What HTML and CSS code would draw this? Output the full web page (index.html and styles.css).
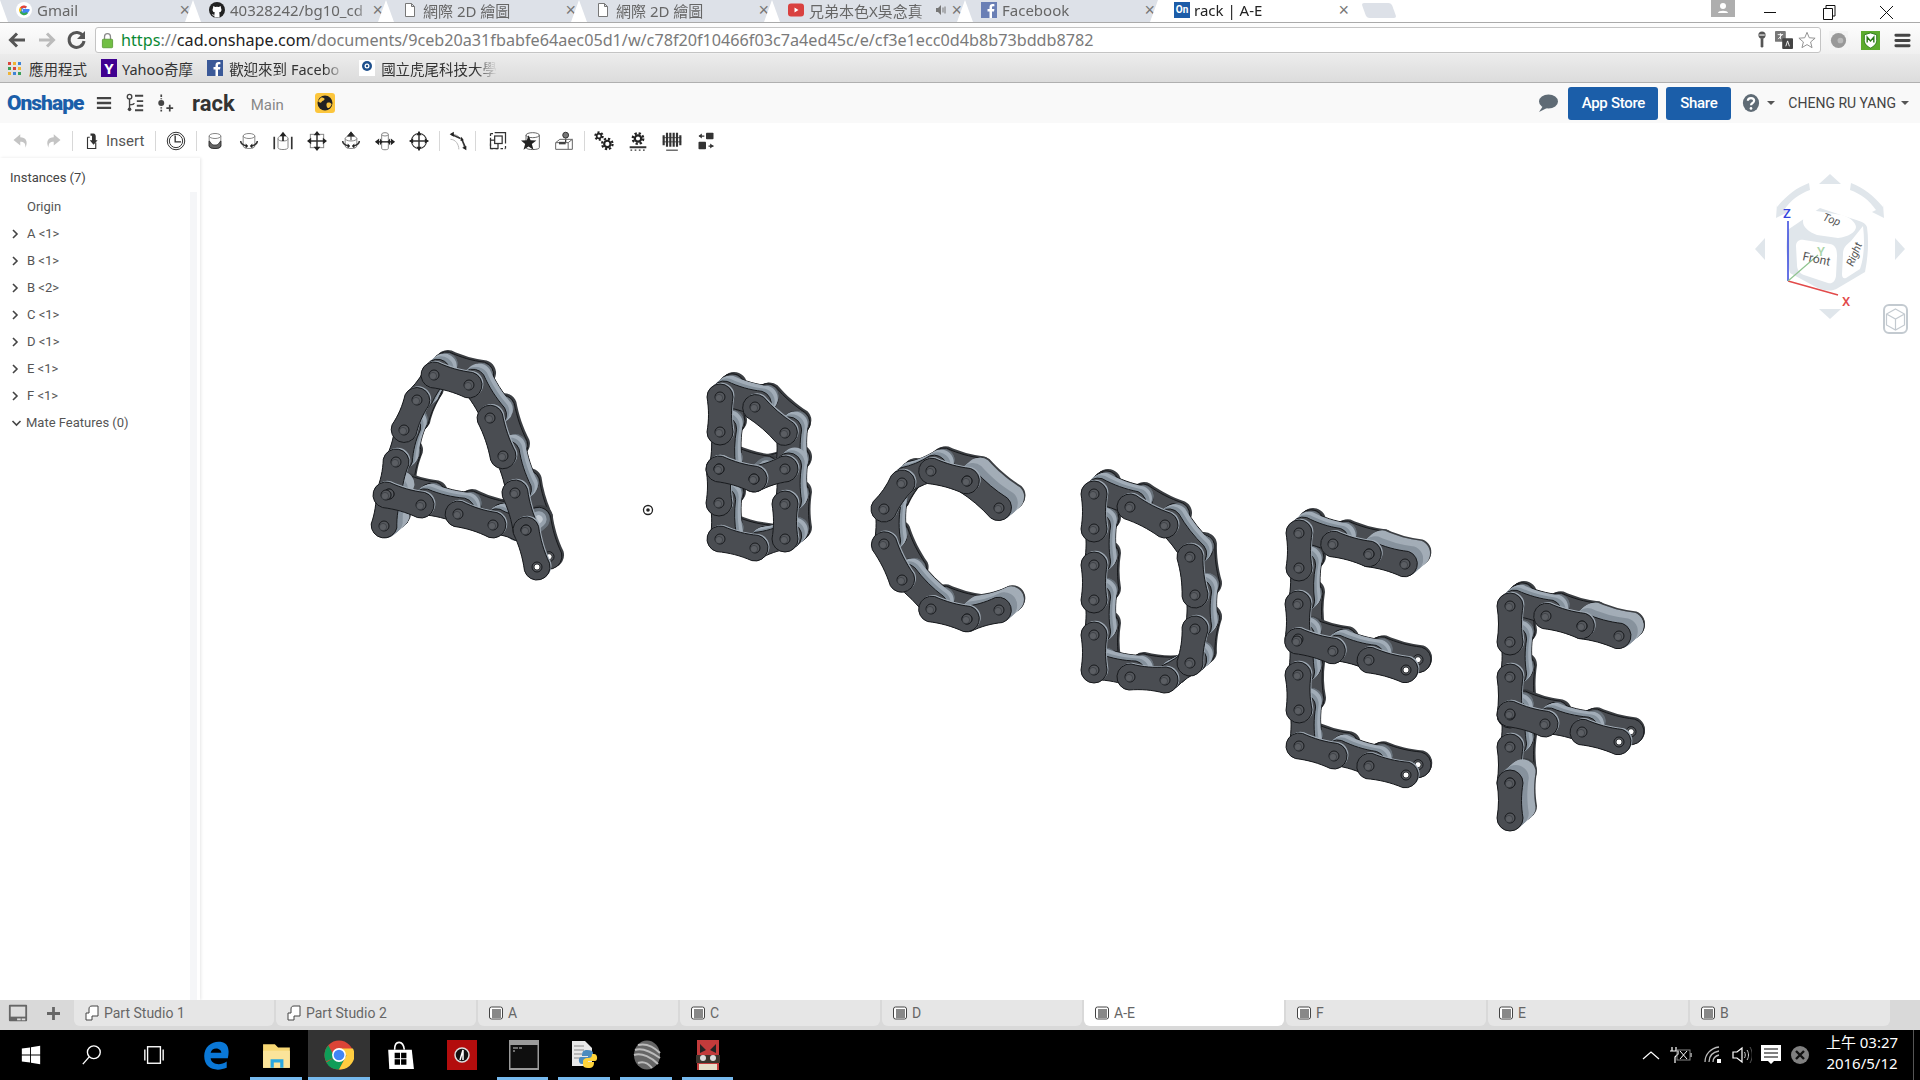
FILE: index.html
```html
<!DOCTYPE html>
<html lang="zh-Hant">
<head>
    <meta charset="UTF-8">
    <title>rack | A-E</title>
    <link rel="stylesheet" href="styles.css">
</head>
<body>
    <!-- browser tabs -->
    <div class="tabstrip">
        <div class="tab">
            <svg class="fav" viewBox="0 0 16 16"><circle cx="8" cy="8" r="8" fill="#fff"/><path d="M13.5 8H8v2.2h3.1A3.3 3.3 0 1 1 10.2 5.5" fill="none" stroke="#4285f4" stroke-width="2.2"/><path d="M4.8 6.2A3.6 3.6 0 0 1 10.2 5.5" fill="none" stroke="#ea4335" stroke-width="2.2"/><path d="M4.5 9.6a3.6 3.6 0 0 1 .2-3.4" fill="none" stroke="#fbbc05" stroke-width="2.2"/><path d="M11 10.6a3.6 3.6 0 0 1-6.4-1" fill="none" stroke="#34a853" stroke-width="2.2"/></svg>
            <span class="tabtext">Gmail</span><span class="tabx">×</span>
        </div>
        <div class="tab">
            <svg class="fav" viewBox="0 0 16 16"><circle cx="8" cy="8" r="8" fill="#222"/><path d="M4 6l.3-2 2 1a5 5 0 0 1 3.4 0l2-1 .3 2c1 2 .6 4-2 4.6.5.5.6 1 .6 5H5.400v-2c-1.500.3-2-.4-2.400-1.500.8.2 1.200.8 2.400 1 0-1 .1-2 .6-2.500C3.400 10 3 8 4 6z" fill="#fff"/></svg>
            <span class="tabtext">40328242/bg10_cd</span><span class="tabx">×</span>
        </div>
        <div class="tab">
            <svg class="fav" viewBox="0 0 16 16"><path d="M3.500 1.500h6l3 3v10h-9z M9.500 1.500v3h3" fill="#fff" stroke="#777"/></svg>
            <span class="tabtext">網際 2D 繪圖</span><span class="tabx">×</span>
        </div>
        <div class="tab">
            <svg class="fav" viewBox="0 0 16 16"><path d="M3.500 1.500h6l3 3v10h-9z M9.500 1.500v3h3" fill="#fff" stroke="#777"/></svg>
            <span class="tabtext">網際 2D 繪圖</span><span class="tabx">×</span>
        </div>
        <div class="tab">
            <svg class="fav" viewBox="0 0 16 16"><rect y="1.500" width="16" height="13" rx="3" fill="#d9413f"/><path d="M6.500 5.500l4 2.500-4 2.500z" fill="#fff"/></svg>
            <span class="tabtext">兄弟本色X吳念真</span>
            <svg class="tabsound" viewBox="0 0 12 12"><path d="M1 4h2l3-3v10L3 8H1z" fill="#777"/><path d="M8 3.500v5M10 2.500v7" stroke="#777" fill="none"/></svg>
            <span class="tabx">×</span>
        </div>
        <div class="tab">
            <svg class="fav" viewBox="0 0 16 16"><rect width="16" height="16" fill="#6a7fb5"/><path d="M11 16V9.500h2l.4-2.500H11V5.500c0-.8.300-1.200 1.200-1.200h1.200V2.200C13 2.100 12.300 2 11.500 2 9.700 2 8.500 3.100 8.500 5.200V7h-2v2.500h2V16z" fill="#fff"/></svg>
            <span class="tabtext">Facebook</span><span class="tabx">×</span>
        </div>
        <div class="tab tab-active">
            <span class="fav-on">On</span>
            <span class="tabtext">rack | A-E</span><span class="tabx">×</span>
        </div>
        <div class="newtab"></div>
        <div class="winctl">
            <div class="profile"><svg viewBox="0 0 24 18" width="24" height="18"><circle cx="12" cy="6" r="3" fill="#fff"/><path d="M7 13c0-3 10-3 10 0z" fill="#fff"/></svg></div>
            <svg class="winbtn" viewBox="0 0 58 22"><path d="M23 12.500h12" stroke="#111"/></svg>
            <svg class="winbtn" viewBox="0 0 58 22"><path d="M24.500 8.500h9v11h-9z M27 8V5.500h9v10.500h-2.500" fill="none" stroke="#111"/></svg>
            <svg class="winbtn" viewBox="0 0 58 22"><path d="M23 6l13 13M36 6L23 19" stroke="#111"/></svg>
        </div>
    </div>

    <!-- address bar -->
    <div class="addressrow">
        <svg class="navbtn" viewBox="0 0 30 26"><path d="M23 13H9M15 6.500L8.500 13l6.500 6.500" fill="none" stroke="#555" stroke-width="3"/></svg>
        <svg class="navbtn" viewBox="0 0 30 26"><path d="M7 13h14M15 6.500l6.500 6.500-6.500 6.500" fill="none" stroke="#bbb" stroke-width="3"/></svg>
        <svg class="navbtn" viewBox="0 0 30 26"><path d="M21 9a7.500 7.500 0 1 0 1 5" fill="none" stroke="#555" stroke-width="3"/><path d="M23 4v8h-8z" fill="#555"/></svg>
        <div class="omnibox">
            <svg class="lock" viewBox="0 0 14 20"><path d="M3.500 9V5.500a3.500 3.500 0 0 1 7 0V9" fill="none" stroke="#888" stroke-width="1.500"/><rect x="1" y="8.500" width="12" height="10" rx="1" fill="#71bf44" stroke="#5a9a35"/></svg>
            <div class="url"><span class="u-https">https</span>://<span class="u-host">cad.onshape.com</span>/documents/9ceb20a31fbabfe64aec05d1/w/c78f20f10466f03c7a4ed45c/e/cf3e1ecc0d4b8b73bddb8782</div>
            <svg class="ombtn" viewBox="0 0 20 20"><circle cx="10" cy="4.500" r="4" fill="#555"/><rect x="7" y="3.500" width="6" height="2" fill="#bbb"/><path d="M8.500 8h3v9l-1.500 2-1.500-2z" fill="#555"/></svg>
            <svg class="ombtn" viewBox="0 0 20 20"><rect x="0" y="0" width="12" height="12" rx="1" fill="#777"/><rect x="8" y="8" width="12" height="12" rx="1" fill="#444"/><path d="M3 4h6M6 2.500V9M3.500 9L8 4" stroke="#fff" fill="none"/><path d="M12 17l2-6 2 6" stroke="#fff" fill="none"/></svg>
            <svg class="ombtn ombtn-star" viewBox="0 0 20 20"><path d="M10 1.500l2.500 6 6.500.5-5 4.200 1.600 6.300-5.600-3.400-5.600 3.400L6 12.200 1 8l6.500-.5z" fill="#fff" stroke="#888"/></svg>
        </div>
        <div class="exts">
            <svg class="ext" viewBox="0 0 20 20"><rect width="20" height="20" fill="#f4f4f4"/><circle cx="10" cy="10" r="8" fill="#999"/><circle cx="12" cy="10" r="3" fill="#bbb"/></svg>
            <svg class="ext" viewBox="0 0 20 20"><rect width="20" height="20" fill="#5cab2e"/><path d="M10 2l6.500 2v6c0 4-3 6-6.500 8-3.500-2-6.500-4-6.500-8V4z" fill="#fff" stroke="#2d7a1a"/><path d="M6.500 12V6.500l3.500 4 3.500-4V12" fill="none" stroke="#2d7a1a" stroke-width="1.500"/></svg>
            <svg class="ext" viewBox="0 0 20 20"><path d="M3 4.500h14M3 10h14M3 15.500h14" stroke="#444" stroke-width="3" stroke-linecap="round"/></svg>
        </div>
    </div>

    <!-- bookmarks -->
    <div class="bookmarks">
        <div class="bm">
            <svg class="bmicon-apps" viewBox="0 0 13 13"><path d="M0 0h3v3H0z" fill="#d9453c"/><path d="M5 0h3v3H5z" fill="#efb336"/><path d="M10 0h3v3h-3z" fill="#3e84d6"/><path d="M0 5h3v3H0z" fill="#3c9f58"/><path d="M5 5h3v3H5z" fill="#d9453c"/><path d="M10 5h3v3h-3z" fill="#efb336"/><path d="M0 10h3v3H0z" fill="#efb336"/><path d="M5 10h3v3H5z" fill="#3e84d6"/><path d="M10 10h3v3h-3z" fill="#3c9f58"/></svg>
            <span>應用程式</span>
        </div>
        <div class="bm">
            <span class="bmicon-y">Y</span><span>Yahoo奇摩</span>
        </div>
        <div class="bm">
            <svg class="bmicon" viewBox="0 0 16 16"><rect width="16" height="16" fill="#3b5998"/><path d="M11 16V9.500h2l.4-2.500H11V5.500c0-.8.300-1.200 1.200-1.200h1.200V2.200C13 2.100 12.300 2 11.500 2 9.700 2 8.500 3.100 8.500 5.200V7h-2v2.500h2V16z" fill="#fff"/></svg>
            <span class="bm-clip">歡迎來到 Facebo</span>
        </div>
        <div class="bm">
            <svg class="bmicon" viewBox="0 0 16 16"><rect width="16" height="16" fill="#fff"/><circle cx="8" cy="6" r="5" fill="#1d4f8c"/><circle cx="8" cy="6" r="2.500" fill="#fff"/><circle cx="8" cy="6" r="1.200" fill="#1d4f8c"/></svg>
            <span class="bm-clip">國立虎尾科技大學</span>
        </div>
    </div>

    <!-- onshape header -->
    <div class="appheader">
        <span class="logo">Onshape</span>
        <svg class="hicon hicon-menu" viewBox="0 0 18 18"><path d="M1 3.500h16M1 9h16M1 14.500h16" stroke="#444" stroke-width="2.600"/></svg>
        <svg class="hicon hicon-ver" viewBox="0 0 22 22"><circle cx="5" cy="4" r="2.500" fill="none" stroke="#444" stroke-width="1.500"/><circle cx="5" cy="18" r="2" fill="#444"/><path d="M5 6.500v10M5 13c5 0 5-1 5-2" fill="none" stroke="#444" stroke-width="1.500"/><path d="M11 3h9M13 9h7M13 14h7M11 19h9" stroke="#444" stroke-width="2"/></svg>
        <svg class="hicon hicon-add" viewBox="0 0 20 22"><circle cx="5" cy="11" r="3.500" fill="#444"/><path d="M5 1v3M5 5.500v1M5 16v1.500M5 19v2" stroke="#444" stroke-width="2"/><path d="M11 17h8M15 13v8" stroke="#444" stroke-width="2"/></svg>
        <span class="docname">rack</span>
        <span class="branch">Main</span>
        <svg class="globe" viewBox="0 0 20 20"><rect width="20" height="20" rx="3" fill="#fcc63d"/><circle cx="10" cy="10" r="7.500" fill="#222"/><path d="M6 4.500c2 0 4 .5 3.500 2S7 7.500 6.500 9 4 9.500 3 8zM12 10c2-1 4 0 4.500 1s-2 4.500-3.500 4-2-4-1-5z" fill="#fcc63d"/></svg>
        <div class="headright">
            <svg class="comment" viewBox="0 0 20 20"><ellipse cx="10.500" cy="8.500" rx="9.500" ry="7" fill="#5f6b75"/><path d="M5 13L1 19l8-4z" fill="#5f6b75"/></svg>
            <button class="btn btn-store">App Store</button>
            <button class="btn btn-share">Share</button>
            <svg class="help" viewBox="0 0 20 22"><ellipse cx="10" cy="11" rx="9" ry="10" fill="#5f6b75"/><path d="M6.500 8.500c0-4 7-4 7 0 0 2.500-3.500 2.500-3.500 5" fill="none" stroke="#fff" stroke-width="2.400"/><circle cx="10" cy="17" r="1.500" fill="#fff"/></svg>
            <span class="caret caret-help"></span>
            <span class="username">CHENG RU YANG</span>
            <span class="caret"></span>
        </div>
    </div>

    <!-- feature toolbar -->
    <div class="toolbar">
        <svg class="ti ti-undo" viewBox="0 0 24 24"><path d="M11 3L2 10.500l9 7.500v-5c5 0 7 2 7 8 4-9 0-14-7-14z" fill="#c4c4c4" stroke="none"/></svg>
        <svg class="ti ti-redo" viewBox="0 0 24 24"><path d="M13 3l9 7.500-9 7.500v-5c-5 0-7 2-7 8-4-9 0-14 7-14z" fill="#c4c4c4" stroke="none"/></svg>
        <span class="sep"></span>
        <svg class="ti ti-insert" viewBox="0 0 24 24"><path d="M6 7h3M6 7v15h11v-8" stroke-width="1.500"/><path d="M10 2h4c2 0 3 2 3 4v5h2.500L14 17 9 11h3V5h-2z" fill="#333" stroke="none"/></svg>
        <span class="insert-label">Insert</span>
        <span class="sep sep-ins"></span>
        <svg class="ti" viewBox="0 0 24 24"><circle cx="12" cy="12" r="10.500"/><circle cx="12" cy="12" r="8"/><path d="M11 5.500V13h7" stroke-width="1.600"/></svg>
        <span class="sep sep-a"></span>
        <svg class="ti" viewBox="0 0 24 24"><ellipse cx="12" cy="6" rx="7" ry="3" stroke="#888"/><path d="M5 6v12c0 4 14 4 14 0V6" stroke="#888"/><path d="M5 12c2 1 2 5 7 5s5-4 7-5v6c0 4-14 4-14 0z" fill="#666" stroke="#333"/></svg>
        <svg class="ti" viewBox="0 0 24 24"><ellipse cx="12" cy="6" rx="7" ry="3" stroke="#888"/><path d="M5 6v12c0 4 14 4 14 0V6" stroke="#888"/><path d="M2 12c0 4 3 5 7 6M22 12c0 4-3 5-7 6" stroke-width="1.800"/><path d="M8 15v6l3-3zM16 15v6l-3-3z" fill="#222" stroke="none"/></svg>
        <svg class="ti" viewBox="0 0 24 24"><ellipse cx="12" cy="9" rx="6" ry="3" stroke="#888"/><path d="M6 9v11c0 3 12 3 12 0V9" stroke="#888"/><path d="M1.500 7v15M22.500 7v15" stroke-width="2"/><path d="M12 1l4 5h-3v6h-2V6H8z" fill="#222" stroke="none"/></svg>
        <svg class="ti" viewBox="0 0 24 24"><rect x="4" y="4" width="16" height="16" stroke="#888"/><path d="M12 3v18M3 12h18" stroke-width="1.800"/><path d="M12 0l4 5H8zM12 24l4-5H8zM0 12l5-4v8zM24 12l-5-4v8z" fill="#222" stroke="none"/></svg>
        <svg class="ti" viewBox="0 0 24 24"><ellipse cx="12" cy="9" rx="7" ry="3" stroke="#888"/><path d="M5 9v9c0 4 14 4 14 0V9" stroke="#888"/><path d="M12 1l4 5H8zM12 6v5" fill="#222"/><path d="M2 12c0 4 3 5 7 6M22 12c0 4-3 5-7 6" stroke-width="1.800"/><path d="M8 15v6l3-3zM16 15v6l-3-3z" fill="#222" stroke="none"/></svg>
        <svg class="ti" viewBox="0 0 24 24"><ellipse cx="12" cy="4" rx="4" ry="2" stroke="#888"/><path d="M8 4v17c0 2 8 2 8 0V4" stroke="#888"/><path d="M1 13h22" stroke-width="1.800"/><path d="M0 13l5-4v8zM24 13l-5-4v8zM9 13l-3-4v8zM15 13l3-4v8z" fill="#222" stroke="none"/></svg>
        <svg class="ti" viewBox="0 0 24 24"><circle cx="12" cy="12" r="9" stroke-width="1.300"/><path d="M12 1v22M1 12h22" stroke-width="1.800"/><path d="M12 0l3 5H9zM12 24l3-5H9zM0 12l5-3v6zM24 12l-5-3v6z" fill="#222" stroke="none"/></svg>
        <span class="sep sep-b"></span>
        <svg class="ti ti-curve" viewBox="0 0 24 24"><path d="M5 4c8 0 14 8 14 16" stroke="#999"/><path d="M3 10c6 0 10 6 10 12" stroke="#bbb"/><path d="M4 4l11 5M17 11l4 9" stroke-width="1.800"/><path d="M2 4l5-3v6zM15 12l1-5 3 4zM22 23l-5-3 5-2z" fill="#222" stroke="none"/></svg>
        <span class="sep sep-c"></span>
        <svg class="ti ti-tight" viewBox="0 0 24 24"><path d="M8 2h13v13" stroke-width="1.500"/><path d="M3 3v9M3 3h3M3 15v3M3 21h3M9 21h3M15 21h6M21 18v3" stroke-dasharray="3 2" stroke-width="1.500"/><rect x="3" y="11" width="9" height="10" stroke-width="1.500"/><rect x="8" y="6" width="9" height="9" stroke-width="1.500" fill="#fff"/></svg>
        <svg class="ti ti-tight" viewBox="0 0 24 24"><ellipse cx="14" cy="5" rx="8" ry="3" stroke="#666"/><path d="M6 5v15c0 3 16 3 16 0V5" stroke="#666"/><path d="M9 5l2.500 6 7 .5-5.500 4 2 7-6-4-6 4 2-7L0 11.500l7-.5z" fill="#222" stroke="none"/></svg>
        <svg class="ti" viewBox="0 0 24 24"><circle cx="14" cy="5" r="3.500" fill="#777" stroke="#333"/><path d="M14 9v5" stroke-width="1.500"/><path d="M2 14l5-4h15v12H2z M2 14h15v8M17 14l5-4" stroke="#666"/><rect x="6" y="13" width="8" height="3" fill="#444" stroke="none"/></svg>
        <span class="sep sep-d"></span>
        <svg class="ti" viewBox="0 0 24 24"><circle cx="6" cy="6" r="2.800" stroke="#222" stroke-width="2"/><circle cx="6" cy="6" r="4.500" stroke="#222" stroke-width="2.400" stroke-dasharray="2.400 2.300"/><circle cx="16" cy="15.500" r="3.800" stroke="#222" stroke-width="2.600"/><circle cx="16" cy="15.500" r="6.300" stroke="#222" stroke-width="2.600" stroke-dasharray="2.700 2.250"/></svg>
        <svg class="ti" viewBox="0 0 24 24"><circle cx="12" cy="9" r="3.800" stroke="#222" stroke-width="2.600"/><circle cx="12" cy="9" r="6.300" stroke="#222" stroke-width="2.800" stroke-dasharray="2.700 2.250"/><path d="M2 19.500h20" stroke-width="2.400"/><path d="M3 23h2M8 23h2M13 23h2M18 23h2" stroke-width="1.500"/></svg>
        <svg class="ti" viewBox="0 0 24 24"><path d="M2 5v12M6 2v17M10 2v17M14 2v17M18 2v17M22 5v12" stroke-width="2.600"/><path d="M1 8h22M1 13h22" stroke-width="1"/><path d="M5 23h14" stroke-width="1.300"/></svg>
        <svg class="ti" viewBox="0 0 24 24"><rect x="12" y="2" width="9" height="8" rx="1" fill="#333" stroke="none"/><rect x="3" y="13" width="9" height="9" rx="1" fill="#333" stroke="none"/><path d="M4 6h6M15 18h6" stroke-width="1.500"/><path d="M3 6l4-3v6zM21 18l-4-3v6z" fill="#333" stroke="none"/></svg>
    </div>

    <!-- main -->
    <div class="workspace">
        <div class="sidebar">
            <div class="inst-head">Instances (7)</div>
            <div class="treerow"><span class="chev-none"></span><span>Origin</span></div>
            <div class="treerow"><svg class="chev" viewBox="0 0 8 10"><path d="M2 1l4 4-4 4" fill="none" stroke="#444" stroke-width="1.600"/></svg><span>A &lt;1&gt;</span></div>
            <div class="treerow"><svg class="chev" viewBox="0 0 8 10"><path d="M2 1l4 4-4 4" fill="none" stroke="#444" stroke-width="1.600"/></svg><span>B &lt;1&gt;</span></div>
            <div class="treerow"><svg class="chev" viewBox="0 0 8 10"><path d="M2 1l4 4-4 4" fill="none" stroke="#444" stroke-width="1.600"/></svg><span>B &lt;2&gt;</span></div>
            <div class="treerow"><svg class="chev" viewBox="0 0 8 10"><path d="M2 1l4 4-4 4" fill="none" stroke="#444" stroke-width="1.600"/></svg><span>C &lt;1&gt;</span></div>
            <div class="treerow"><svg class="chev" viewBox="0 0 8 10"><path d="M2 1l4 4-4 4" fill="none" stroke="#444" stroke-width="1.600"/></svg><span>D &lt;1&gt;</span></div>
            <div class="treerow"><svg class="chev" viewBox="0 0 8 10"><path d="M2 1l4 4-4 4" fill="none" stroke="#444" stroke-width="1.600"/></svg><span>E &lt;1&gt;</span></div>
            <div class="treerow"><svg class="chev" viewBox="0 0 8 10"><path d="M2 1l4 4-4 4" fill="none" stroke="#444" stroke-width="1.600"/></svg><span>F &lt;1&gt;</span></div>
            <div class="treerow"><svg class="chev chev-down" viewBox="0 0 10 8"><path d="M1 2l4 4 4-4" fill="none" stroke="#444" stroke-width="1.600"/></svg><span>Mate Features (0)</span></div>
        </div>
        <div class="canvas">
            <svg id="chains" class="chains" viewBox="198 160 1720 843" width="1720" height="843"></svg>
            <svg class="navcube" viewBox="0 0 200 180" width="200" height="180">
                <g fill="#e0e6eb">
                    <path d="M110 14l11 10H99z"/>
                    <path d="M110 159l11-10H99z"/>
                    <path d="M35 89l10-11v22z"/>
                    <path d="M185 89l-10-11v22z"/>
                    <path d="M57 47c10-12 19-19 32-24l1 7c-11 4-19 10-26 20l4 2-12 6 1-14z"/>
                    <path d="M163 47c-10-12-19-19-32-24l-1 7c11 4 19 10 26 20l-4 2 12 6-1-14z"/>
                </g>
                <path d="M100 48l27 9c8 3 18 4 20 10 2 15 1 30-2 45l-27 16c-8 5-17 2-24-2l-24-13c-4-16-5-31-1-44z" fill="#e0e6eb"/>
                <path d="M90 50l32 5c8 2 14 8 14 12 0 5-8 10-18 11l-21-3c-8-3-14-8-14-13 0-6 3-12 7-12zM84 80l26 4c6 1 7 6 7 12l-1 20c-1 6-4 8-8 7l-24-8c-5-2-7-6-7-10l-1-19c0-4 3-7 8-6zM143 66c2 16 1 32-3 43l-14 9c-3 1-4-1-4-4l1-20c0-6 3-9 8-13z" fill="#fff"/>
                <path d="M68 61v60" stroke="#3344dd" stroke-width="1.500"/>
                <path d="M68 121l50 14" stroke="#e24a4a" stroke-width="1.500"/>
                <path d="M68 121l30-26" stroke="#8fc48f" stroke-width="1.200"/>
                <text x="63" y="58" class="cube-axis cube-z">Z</text>
                <text x="122" y="146" class="cube-axis cube-x">X</text>
                <text x="97" y="96" class="cube-axis cube-y">Y</text>
                <text class="cube-label" transform="translate(82,100) rotate(12)">Front</text>
                <text class="cube-label cube-label-sm" transform="translate(102,60) rotate(20)">Top</text>
                <text class="cube-label cube-label-sm" transform="translate(133,107) rotate(-68)">Right</text>
                <rect x="164" y="145" width="23" height="28" rx="5" fill="none" stroke="#c3cad0" stroke-width="2"/>
                <path d="M175.500 149l9 5v11l-9 5-9-5v-11zM166.500 154l9 5 9-5M175.500 159v11" fill="none" stroke="#c3cad0" stroke-width="1.200"/>
            </svg>
        </div>
    </div>

    <!-- part studio tabs -->
    <div class="bottombar">
        <div class="bottomtools">
            <svg class="bt-mon" viewBox="0 0 22 22"><rect x="1" y="2" width="20" height="18" rx="1" fill="#666"/><rect x="3" y="4" width="16" height="11" fill="#ddd"/><rect x="10" y="17" width="4" height="2" fill="#ddd"/><rect x="15" y="17" width="4" height="2" fill="#ddd"/></svg>
            <svg class="bt-plus" viewBox="0 0 14 14"><path d="M7 0v14M0 7h14" stroke="#666" stroke-width="3"/></svg>
        </div>
        <div class="btab"><svg class="bt-ico" viewBox="0 0 16 16"><path d="M8 1h6v10H8v4H2V8h3V4c0-2 1-3 3-3z" fill="#fff" stroke="#444"/></svg>Part Studio 1</div>
        <div class="btab"><svg class="bt-ico" viewBox="0 0 16 16"><path d="M8 1h6v10H8v4H2V8h3V4c0-2 1-3 3-3z" fill="#fff" stroke="#444"/></svg>Part Studio 2</div>
        <div class="btab"><svg class="bt-ico" viewBox="0 0 16 16"><rect x="1.500" y="2" width="13" height="12" rx="2" fill="#fff" stroke="#444"/><rect x="4" y="4" width="9" height="9" fill="#888"/></svg>A</div>
        <div class="btab"><svg class="bt-ico" viewBox="0 0 16 16"><rect x="1.500" y="2" width="13" height="12" rx="2" fill="#fff" stroke="#444"/><rect x="4" y="4" width="9" height="9" fill="#888"/></svg>C</div>
        <div class="btab"><svg class="bt-ico" viewBox="0 0 16 16"><rect x="1.500" y="2" width="13" height="12" rx="2" fill="#fff" stroke="#444"/><rect x="4" y="4" width="9" height="9" fill="#888"/></svg>D</div>
        <div class="btab btab-active"><svg class="bt-ico" viewBox="0 0 16 16"><rect x="1.500" y="2" width="13" height="12" rx="2" fill="#fff" stroke="#444"/><rect x="4" y="4" width="9" height="9" fill="#888"/></svg>A-E</div>
        <div class="btab"><svg class="bt-ico" viewBox="0 0 16 16"><rect x="1.500" y="2" width="13" height="12" rx="2" fill="#fff" stroke="#444"/><rect x="4" y="4" width="9" height="9" fill="#888"/></svg>F</div>
        <div class="btab"><svg class="bt-ico" viewBox="0 0 16 16"><rect x="1.500" y="2" width="13" height="12" rx="2" fill="#fff" stroke="#444"/><rect x="4" y="4" width="9" height="9" fill="#888"/></svg>E</div>
        <div class="btab"><svg class="bt-ico" viewBox="0 0 16 16"><rect x="1.500" y="2" width="13" height="12" rx="2" fill="#fff" stroke="#444"/><rect x="4" y="4" width="9" height="9" fill="#888"/></svg>B</div>
    </div>

    <!-- windows taskbar -->
    <div class="taskbar">
        <div class="tk"><svg class="tk-ico" viewBox="0 0 24 24"><path d="M2 5l9-1.300V11.500H2zM12 3.500L22 2v9.500H12zM2 12.500h9v7.800L2 19zM12 12.500h10V22l-10-1.500z" fill="#fff"/></svg></div>
        <div class="tk"><svg class="tk-ico" viewBox="0 0 24 24"><circle cx="14" cy="9" r="7" fill="none" stroke="#fff" stroke-width="1.500"/><path d="M9 14l-7 8" stroke="#fff" stroke-width="1.500"/></svg></div>
        <div class="tk"><svg class="tk-ico" viewBox="0 0 24 24"><rect x="5" y="3" width="14" height="18" fill="none" stroke="#fff" stroke-width="1.500"/><path d="M2 6v12M22 6v12" stroke="#fff" stroke-width="1.500"/></svg></div>
        <div class="tk"><svg class="tk-ico tk-big" viewBox="0 0 28 28"><path d="M25 17H9c.5 5 8 8 15 3v6c-10 4-21 1-21-11C3 5 12 0 20 2c5 1 7 7 5 15zM9 12h10c0-5-9-6-10 0z" fill="#0a78d7"/></svg></div>
        <div class="tk tk-on"><svg class="tk-ico tk-big" viewBox="0 0 28 28"><path d="M1 4h11l3 3h11v19H1z" fill="#f7d774"/><path d="M1 10h25v16H1z" fill="#fbe49a"/><path d="M8 18h12v8h-3v-5h-6v5H8z" fill="#29a8e0"/></svg></div>
        <div class="tk tk-on tk-active"><svg class="tk-ico tk-big" viewBox="0 0 28 28"><circle cx="14" cy="14" r="13.500" fill="#db4437"/><path d="M14 14L2 21a13.500 13.500 0 0 0 12 6.500l7-13z" fill="#0f9d58"/><path d="M14 8h13a13.500 13.500 0 0 1-13 19.500l7-13z" fill="#ffcd40"/><path d="M1.800 20A13.500 13.500 0 0 1 4 5l6 11z" fill="#0f9d58"/><circle cx="14" cy="14" r="6.500" fill="#fff"/><circle cx="14" cy="14" r="5" fill="#4285f4"/></svg></div>
        <div class="tk"><svg class="tk-ico tk-big" viewBox="0 0 28 28"><path d="M3 9h22l2 18H4z" fill="#fff"/><path d="M9 9c0-9 8-9 9 0" fill="none" stroke="#fff" stroke-width="1.500"/><path d="M9 12h5v5H9zM15 12h5v5h-5zM9 18h5v5H9zM15 18h5v5h-5z" fill="#000"/></svg></div>
        <div class="tk"><svg class="tk-ico tk-big" viewBox="0 0 30 30"><rect width="30" height="30" fill="#b30d0d"/><circle cx="15" cy="15" r="7" fill="#111" stroke="#ddd" stroke-width="1.500"/><path d="M13 20l3-10v10" stroke="#fff" fill="none" stroke-width="1.500"/></svg></div>
        <div class="tk tk-on"><svg class="tk-ico tk-big" viewBox="0 0 30 30"><rect width="30" height="30" fill="#9a9a9a"/><rect x="1.500" y="5" width="27" height="23" fill="#0f0f0f"/><path d="M4 8h5M10 8h3M4 11h2" stroke="#ccc"/></svg></div>
        <div class="tk tk-on"><svg class="tk-ico tk-big" viewBox="0 0 30 30"><path d="M2 1h13l7 7v18H2z" fill="#e8e8e8"/><path d="M4 6h10M4 10h10M4 14h8M4 18h8" stroke="#888"/><path d="M17 10c-4 0-5 2-5 6h6v1h-7c-3 0-3 7 1 7h2c0-3 1-4 4-4 3 0 5-1 5-4v-3c0-2-2-3-6-3z" fill="#4b8bbe"/><path d="M18 28c5 0 6-2 6-6h-6v-1h7c3 0 3-7-1-7h-2c0 3-1 4-4 4-3 0-5 1-5 4v3c0 2 2 3 5 3z" fill="#ffd43b"/></svg></div>
        <div class="tk tk-on"><svg class="tk-ico tk-big" viewBox="0 0 30 30"><ellipse cx="15" cy="15" rx="13" ry="14.500" fill="#666"/><path d="M3 10c8-3 18 3 25 8M2 15c8-3 18 3 24 9M6 5c8-2 16 2 22 8M6 23c5-2 10 0 14 5" fill="none" stroke="#bbb" stroke-width="2"/></svg></div>
        <div class="tk tk-on"><svg class="tk-ico tk-big" viewBox="0 0 30 30"><rect x="4" width="22" height="30" fill="#c23b3b"/><path d="M7 4l6 6-6 3zM23 4l-6 6 6 3z" fill="#222"/><path d="M3 15h24v8H3z" fill="#3b342c"/><path d="M6 24h18v6H6z" fill="#e6ddc9"/><circle cx="10" cy="18" r="3" fill="#ddd"/><circle cx="20" cy="18" r="3" fill="#ddd"/></svg></div>
        <div class="tray">
            <svg class="tr-ico" viewBox="0 0 20 20"><path d="M2 14l8-7 8 7" fill="none" stroke="#fff" stroke-width="1.200"/></svg>
            <svg class="tr-ico tr-batt" viewBox="0 0 24 20"><path d="M2 2v4M6 2v4M0 6h8v3l-3 3v6" fill="none" stroke="#fff" stroke-width="1.200"/><rect x="7" y="5" width="13" height="10" fill="none" stroke="#888"/><path d="M10 6l7 8M17 6l-7 8" stroke="#fff"/><rect x="20" y="8" width="2" height="4" fill="#888"/></svg>
            <svg class="tr-ico" viewBox="0 0 20 20"><path d="M2 17c0-8 6-14 14-15M6 17c0-6 4-10 10-11M10 17c0-3 2-6 6-7" fill="none" stroke="#bbb" stroke-width="1.300"/><rect x="14" y="14" width="4" height="4" fill="#fff"/></svg>
            <svg class="tr-ico" viewBox="0 0 20 20"><path d="M1 7h4l5-4v14l-5-4H1z" fill="none" stroke="#fff" stroke-width="1.200"/><path d="M12.500 7c1 2 1 4 0 6M15 5c2 3 2 7 0 10" fill="none" stroke="#ccc"/><path d="M18 2c3 5 3 11 0 16" fill="none" stroke="#555"/></svg>
            <svg class="tr-ico" viewBox="0 0 20 20"><path d="M0 0h20v16h-7l-3 3-3-3H0z" fill="#fff"/><path d="M3 4h14M3 8h14M3 12h14" stroke="#000" stroke-width="1.200"/></svg>
            <svg class="tr-ico" viewBox="0 0 20 20"><circle cx="10" cy="10" r="9" fill="#808080"/><path d="M6 6l8 8M14 6l-8 8" stroke="#111" stroke-width="2.400"/></svg>
            <div class="clock"><div>上午 03:27</div><div>2016/5/12</div></div>
            <div class="showdesk"></div>
        </div>
    </div>

    <script src="chain.js"></script>
</body>
</html>
```

FILE: styles.css
```css
* {
    box-sizing: border-box;
}

html, body {
    margin: 0;
    padding: 0;
}

body {
    width: 1920px;
    height: 1080px;
    overflow: hidden;
    background: #fff;
    font-family: "Noto Sans", "Noto Sans CJK TC", sans-serif;
    display: flex;
    flex-direction: column;
}

/* browser tabs */
.tabstrip {
    height: 23px;
    display: flex;
    background: #fff;
    border-bottom: 1px solid #aaa;
    flex-shrink: 0;
}

.tab {
    width: 193px;
    height: 22px;
    padding: 0 3px 2px 16px;
    display: flex;
    align-items: center;
    background: #dde1e8;
    clip-path: polygon(0 0, 100% 0, 185px 100%, 8px 100%);
    color: #666;
    font-size: 15px;
    flex-shrink: 0;
}

.tab-active {
    width: 204px;
    background: #fff;
    color: #222;
    padding-right: 13px;
    clip-path: none;
}

.fav {
    width: 16px;
    height: 16px;
    flex-shrink: 0;
    margin-right: 5px;
}

.fav-on {
    width: 16px;
    height: 16px;
    flex-shrink: 0;
    margin-right: 4px;
    background: #1c5ca8;
    color: #fff;
    font-size: 10px;
    font-weight: 700;
    line-height: 16px;
    text-align: center;
    font-family: Roboto, sans-serif;
}

.tabtext {
    flex: 1;
    white-space: nowrap;
    overflow: hidden;
    -webkit-mask-image: linear-gradient(90deg, #000 88%, transparent);
    mask-image: linear-gradient(90deg, #000 88%, transparent);
}

.tabsound {
    width: 12px;
    height: 12px;
    margin: 0 4px;
    flex-shrink: 0;
}

.tabx {
    color: #777;
    font-size: 18px;
    line-height: 18px;
    font-family: "Liberation Sans", sans-serif;
    flex-shrink: 0;
}

.newtab {
    width: 30px;
    height: 15px;
    margin: 3px 0 0 2px;
    background: #dde1e8;
    border-radius: 3px;
    transform: skewX(20deg);
}

.winctl {
    margin-left: auto;
    display: flex;
    padding-right: 5px;
}

.profile {
    width: 24px;
    height: 17px;
    background: #aeaeae;
    margin-right: 6px;
    overflow: hidden;
}

.winbtn {
    width: 58px;
    height: 22px;
}

/* address row */
.addressrow {
    height: 31px;
    display: flex;
    align-items: center;
    background: linear-gradient(#fdfdfd, #f0f0f0);
    padding: 3px 0 0 2px;
    flex-shrink: 0;
}

.navbtn {
    width: 30px;
    height: 26px;
    flex-shrink: 0;
}

.omnibox {
    width: 1726px;
    height: 26px;
    margin-left: 3px;
    display: flex;
    align-items: center;
    background: #fff;
    border: 1px solid #c4c4c4;
    border-radius: 3px;
    padding: 0 4px 0 5px;
}

.lock {
    width: 13px;
    height: 17px;
    flex-shrink: 0;
    margin-right: 7px;
}

.url {
    flex: 1;
    font-size: 16.2px;
    color: #7a7a7a;
    white-space: nowrap;
}

.u-https {
    color: #0b8a34;
}

.u-host {
    color: #222;
}

.ombtn {
    width: 18px;
    height: 18px;
    margin-left: 4px;
}

.ombtn-star {
    margin-left: 5px;
}

.exts {
    display: flex;
    align-items: center;
    gap: 13px;
    margin-left: 8px;
}

.ext {
    width: 19px;
    height: 19px;
}

/* bookmarks */
.bookmarks {
    height: 29px;
    display: flex;
    align-items: center;
    background: linear-gradient(#ececec, #dcdcdc);
    border-bottom: 1px solid #b0b0b0;
    padding-left: 8px;
    font-size: 14.5px;
    color: #333;
    flex-shrink: 0;
}

.bm {
    display: flex;
    align-items: center;
    margin-right: 14px;
    white-space: nowrap;
}

.bmicon-apps {
    width: 13px;
    height: 13px;
    margin-right: 8px;
}

.bmicon-y {
    width: 16px;
    height: 18px;
    background: #400191;
    color: #fff;
    font-size: 15px;
    font-weight: 700;
    line-height: 18px;
    text-align: center;
    margin-right: 5px;
}

.bmicon {
    width: 16px;
    height: 16px;
    margin-right: 6px;
    flex-shrink: 0;
}

.bm-clip {
    width: 116px;
    -webkit-mask-image: linear-gradient(90deg, #000 82%, transparent);
    mask-image: linear-gradient(90deg, #000 82%, transparent);
}

/* onshape header */
.appheader {
    height: 40px;
    display: flex;
    align-items: center;
    background: #f9f9f9;
    padding-left: 7px;
    flex-shrink: 0;
}

.logo {
    font-family: Roboto, sans-serif;
    font-weight: 900;
    font-size: 21px;
    color: #1b5ea9;
    letter-spacing: -1px;
    width: 89px;
}

.hicon {
    flex-shrink: 0;
}

.hicon-menu {
    width: 16px;
    height: 16px;
}

.hicon-ver {
    width: 20px;
    height: 20px;
    margin-left: 13px;
}

.hicon-add {
    width: 17px;
    height: 20px;
    margin-left: 12px;
}

.docname {
    font-family: Roboto, sans-serif;
    font-weight: 700;
    font-size: 22px;
    color: #333;
    margin-left: 18px;
}

.branch {
    font-family: Roboto, sans-serif;
    font-size: 15px;
    color: #888;
    margin-left: 16px;
    padding-top: 3px;
}

.globe {
    width: 20px;
    height: 20px;
    margin-left: 31px;
}

.headright {
    margin-left: auto;
    display: flex;
    align-items: center;
    padding-right: 13px;
}

.comment {
    width: 20px;
    height: 20px;
    margin-right: 10px;
}

.btn {
    height: 33px;
    border: 0;
    border-radius: 3px;
    background: #1b5ea9;
    color: #fff;
    font-family: Roboto, sans-serif;
    font-size: 15px;
    font-weight: 500;
    letter-spacing: -.3px;
    padding: 0;
}

.btn-store {
    width: 90px;
    margin-right: 8px;
}

.btn-share {
    width: 65px;
    margin-right: 11px;
}

.help {
    width: 18px;
    height: 20px;
}

.caret {
    width: 0;
    height: 0;
    border-left: 4px solid transparent;
    border-right: 4px solid transparent;
    border-top: 4px solid #555;
    margin-left: 5px;
    margin-right: -2px;
}

.caret-help {
    margin-left: 7px;
    margin-right: 0;
}

.username {
    font-family: Roboto, sans-serif;
    font-size: 14px;
    color: #444;
    margin-left: 13px;
    white-space: nowrap;
}

/* feature toolbar */
.toolbar {
    height: 35px;
    display: flex;
    align-items: center;
    background: #fff;
    padding-left: 12px;
    flex-shrink: 0;
}

.ti {
    width: 20px;
    height: 20px;
    margin-right: 14px;
    flex-shrink: 0;
    fill: none;
    stroke: #333;
    stroke-width: 1.200;
}

.ti-undo, .ti-redo {
    width: 18px;
    height: 18px;
}

.ti-insert {
    margin-right: 5px;
    width: 18px;
}

.insert-label {
    font-family: Roboto, sans-serif;
    font-size: 15px;
    color: #555;
    margin-right: 11px;
}

.sep {
    width: 1px;
    height: 20px;
    background: #d8d8d8;
    margin: 0 10px 0 -4px;
    flex-shrink: 0;
}

.sep-ins {
    margin-left: 0;
}

.sep-a {
    margin: 0 8px 0 -4px;
}

.sep-b {
    margin: 0 8px 0 -4px;
}

.sep-c {
    margin: 0 12px 0 -5px;
}

.sep-d {
    margin: 0 9px 0 -4px;
}

.ti-curve {
    margin-right: 12px;
}

.ti-tight {
    margin-right: 13px;
}

/* main */
.workspace {
    flex: 1;
    display: flex;
    min-height: 0;
}

.sidebar {
    width: 200px;
    padding-top: 10px;
    font-family: Roboto, sans-serif;
    font-size: 13px;
    color: #555;
    box-shadow: 1px 0 3px rgba(0, 0, 0, .1);
    background: linear-gradient(#f5f6f8, #f5f6f8) no-repeat 190px 34px / 7px 100%, #fff;
    flex-shrink: 0;
}

.inst-head {
    height: 20px;
    line-height: 20px;
    padding-left: 10px;
    color: #444;
    margin-bottom: 5px;
}

.treerow {
    height: 27px;
    display: flex;
    align-items: center;
    padding-left: 11px;
}

.chev {
    width: 8px;
    height: 10px;
    margin-right: 8px;
}

.chev-none {
    width: 16px;
}

.chev-down {
    width: 11px;
    height: 8px;
    margin-right: 4px;
}

.canvas {
    flex: 1;
    position: relative;
}

.chains {
    position: absolute;
    left: 0;
    top: 0;
}

.navcube {
    position: absolute;
    right: 0;
    top: 2px;
}

.cube-axis {
    font-family: Roboto, sans-serif;
    font-size: 13px;
    font-weight: 500;
}

.cube-z {
    fill: #3344dd;
}

.cube-x {
    fill: #e24a4a;
}

.cube-y {
    fill: #a9d5a9;
}

.cube-label {
    font-family: Roboto, sans-serif;
    font-size: 12px;
    fill: #555;
}

.cube-label-sm {
    font-size: 11px;
    font-style: italic;
}

/* part studio tabs */
.bottombar {
    height: 30px;
    display: flex;
    background: #d9d9d9;
    align-items: flex-start;
    flex-shrink: 0;
    font-family: Roboto, sans-serif;
    font-size: 14px;
    color: #666;
    gap: 2px;
}

.bottomtools {
    width: 72px;
    height: 26px;
    display: flex;
    align-items: center;
    padding-left: 8px;
}

.bt-mon {
    width: 20px;
    height: 20px;
}

.bt-plus {
    width: 13px;
    height: 13px;
    margin-left: 19px;
}

.btab {
    width: 200px;
    height: 26px;
    background: #e6e6e6;
    border-radius: 0 0 6px 6px;
    display: flex;
    align-items: center;
    padding-left: 10px;
}

.btab-active {
    background: #fff;
}

.bt-ico {
    width: 16px;
    height: 16px;
    margin-right: 4px;
}

/* windows taskbar */
.taskbar {
    height: 50px;
    background: #000;
    display: flex;
    flex-shrink: 0;
}

.tk {
    width: 61.6px;
    height: 50px;
    display: flex;
    align-items: center;
    justify-content: center;
    position: relative;
}

.tk-on::after {
    content: "";
    position: absolute;
    left: 4px;
    right: 6px;
    bottom: 0;
    height: 3px;
    background: #76b9ed;
}

.tk-active {
    background: #333;
}

.tk-active::after {
    left: 0;
    right: 0;
}

.tk-ico {
    width: 22px;
    height: 22px;
}

.tk-big {
    width: 30px;
    height: 30px;
}

.tray {
    margin-left: auto;
    display: flex;
    align-items: center;
    color: #fff;
}

.tr-ico {
    width: 20px;
    height: 20px;
    margin-right: 9px;
}

.tr-batt {
    width: 24px;
}

.clock {
    width: 96px;
    text-align: center;
    font-size: 15px;
    line-height: 21px;
    margin-left: -5px;
    padding-bottom: 4px;
}

.showdesk {
    width: 7px;
    height: 50px;
    border-left: 1px solid #555;
    margin-left: 3px;
}
```

FILE: chain.js
```js
// draws the roller chain letters into the svg, pin coordinates are page pixels
// link: [x1, y1, x2, y2, end]  end 1 = open hole at 2nd pin, end 2 = solid block end
const DEPTH = [14, -12];
const R = 13;
const WAIST = 11;

const letters = [
    { // A
        o: [[382,528,387,496,3], [394,464,387,496], [402,432,415,402], [432,377,467,387], [488,420,501,458], [513,495,524,532]],
        i: [[394,464,402,432], [415,402,432,377], [467,387,488,420], [501,458,513,495], [419,507,456,516], [491,527,513,533]],
        t: [[384,497,419,507], [456,516,491,527], [524,532,535,569,1]]
    },
    { // B
        o: [[718,399,718,434], [753,409,783,435], [717,471,717,505], [783,506,783,541]],
        i: [[718,399,753,409], [783,435,783,471], [718,434,717,471], [717,505,718,541], [783,471,783,506], [753,550,783,541]],
        t: [[752,481,783,471], [717,471,752,481], [718,541,753,550]]
    },
    { // C
        o: [[965,483,997,510,2], [965,621,997,612,2], [882,511,900,485], [929,473,965,483], [882,546,900,582], [929,611,965,621]],
        i: [[900,485,929,473], [882,511,882,546], [900,582,929,611]],
        t: []
    },
    { // D
        o: [[1092,496,1092,531], [1092,567,1092,602], [1092,637,1092,672], [1128,679,1163,682], [1188,665,1193,631], [1193,597,1188,559], [1163,527,1128,509]],
        i: [[1092,531,1092,567], [1092,602,1092,637], [1092,672,1128,679], [1163,682,1188,665], [1193,631,1193,597], [1188,559,1163,527], [1128,509,1092,496]],
        t: []
    },
    { // E
        o: [[1367,556,1403,566,2], [1297,535,1297,570], [1296,606,1296,641], [1296,677,1297,712], [1331,546,1367,556]],
        i: [[1297,535,1331,546], [1297,570,1296,606], [1296,641,1296,677], [1297,712,1297,748], [1331,653,1367,663], [1332,758,1367,769]],
        t: [[1295,643,1331,653], [1367,662,1404,672,1], [1297,748,1332,758], [1367,768,1404,777,1]]
    },
    { // F
        o: [[1580,628,1617,638,2], [1508,608,1508,644], [1508,679,1508,717], [1508,749,1508,785], [1544,618,1580,628], [1508,785,1508,820,4]],
        i: [[1508,608,1544,618], [1508,644,1508,679], [1508,717,1508,749], [1543,726,1580,735]],
        t: [[1508,716,1543,726], [1580,734,1617,744,1]]
    }
];

function plate(l, d) {
    const ox = DEPTH[0] * d, oy = DEPTH[1] * d;
    const x1 = l[0] + ox, y1 = l[1] + oy, x2 = l[2] + ox, y2 = l[3] + oy;
    const len = Math.hypot(x2 - x1, y2 - y1);
    const ux = (x2 - x1) / len, uy = (y2 - y1) / len;
    const nx = -uy, ny = ux;
    const c = len * 0.35;
    const f = v => v.toFixed(1);
    return 'M' + f(x1 + nx * R) + ' ' + f(y1 + ny * R) +
        'C' + f(x1 + ux * c + nx * WAIST) + ' ' + f(y1 + uy * c + ny * WAIST) + ' ' +
        f(x2 - ux * c + nx * WAIST) + ' ' + f(y2 - uy * c + ny * WAIST) + ' ' +
        f(x2 + nx * R) + ' ' + f(y2 + ny * R) +
        'A' + R + ' ' + R + ' 0 0 0 ' + f(x2 - nx * R) + ' ' + f(y2 - ny * R) +
        'C' + f(x2 - ux * c - nx * WAIST) + ' ' + f(y2 - uy * c - ny * WAIST) + ' ' +
        f(x1 + ux * c - nx * WAIST) + ' ' + f(y1 + uy * c - ny * WAIST) + ' ' +
        f(x1 - nx * R) + ' ' + f(y1 - ny * R) +
        'A' + R + ' ' + R + ' 0 0 0 ' + f(x1 + nx * R) + ' ' + f(y1 + ny * R) + 'Z';
}

function shape(l, d) {
    return '<path d="' + plate(l, d) + '" fill="#4a4d52" stroke="#16181b" stroke-width="1"/>';
}

function sweep(l, from, to, light, dark) {
    let s = '';
    const steps = Math.max(2, Math.round((to - from) * 14));
    for (let k = steps; k >= 0; k--) {
        const t = k / steps;
        const col = t > 0.5 ? light : dark;
        s += '<path d="' + plate(l, from + (to - from) * t) + '" fill="' + col + '"/>';
    }
    return s;
}

function pin(x, y) {
    return '<circle cx="' + x + '" cy="' + y + '" r="5" fill="#55585d" stroke="#17191c"/>' +
        '<circle cx="' + (x - 1) + '" cy="' + (y + 1) + '" r="3.600" fill="#5b5e63" stroke="#33353a" stroke-width=".6"/>';
}

function hole(x, y) {
    return '<circle cx="' + x + '" cy="' + y + '" r="5" fill="#55585d" stroke="#17191c"/>' +
        '<circle cx="' + x + '" cy="' + y + '" r="3" fill="#fff" stroke="#17191c" stroke-width=".8"/>';
}

function roller(x, y) {
    const x1 = x + DEPTH[0] * 0.1, y1 = y + DEPTH[1] * 0.1;
    const x2 = x + DEPTH[0] * 0.9, y2 = y + DEPTH[1] * 0.9;
    const seg = (w, c) => '<path d="M' + x1 + ' ' + y1 + 'L' + x2 + ' ' + y2 + '" stroke="' + c + '" stroke-width="' + w + '" stroke-linecap="round"/>';
    return seg(22, '#68717a') + seg(16, '#97a2ad') + seg(8, '#c2cad2');
}

let html = '';
for (const L of letters) {
    const all = L.o.concat(L.i, L.t);
    const outer = L.o.concat(L.t);
    // back outer plates
    for (const l of outer) {
        html += sweep(l, 0.86, 1, '#3c3f43', '#3c3f43') + shape(l, 0.86);
    }
    for (const l of outer) {
        if (l[4] === 1) html += hole(l[2] + DEPTH[0] * 0.86, l[3] + DEPTH[1] * 0.86);
    }
    // back inner plates
    for (const l of L.i) html += shape(l, 0.72);
    // rollers
    for (const l of all) {
        if (l[4] !== 1) html += roller(l[2], l[3]);
        html += roller(l[0], l[1]);
    }
    // front inner plates with lit edge
    for (const l of L.i) {
        html += sweep(l, 0.26, 0.7, '#a2adb8', '#85919c') + shape(l, 0.26);
    }
    // front outer plates, crossbars last
    for (const l of outer) {
        const solid = l[4] === 2 || l[4] === 3 || l[4] === 4;
        html += sweep(l, 0, solid ? 0.9 : 0.1, '#a3adb7', '#87929d') + shape(l, 0);
    }
    for (const l of outer) {
        html += pin(l[0], l[1]);
        html += l[4] === 1 ? hole(l[2], l[3]) : pin(l[2], l[3]);
    }
}
// origin marker
html += '<circle cx="646" cy="512" r="4.500" fill="#fff" stroke="#222" stroke-width="1.300"/><circle cx="646" cy="512" r="1.800" fill="#222"/>';
document.getElementById('chains').innerHTML = html;
```
